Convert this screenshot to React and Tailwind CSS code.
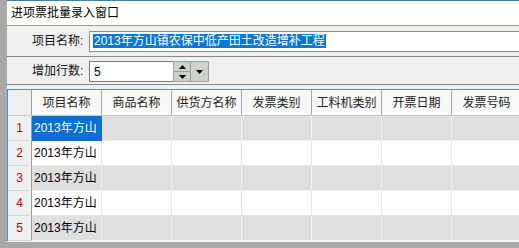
import React from 'react';

const COLUMNS = ['项目名称', '商品名称', '供货方名称', '发票类别', '工料机类别', '开票日期', '发票号码'];
const ROWS = [1, 2, 3, 4, 5];
const FONT = { fontFamily: '"Liberation Sans", "Noto Sans CJK SC", sans-serif' };

const SpinBox = ({ value }) => (
  <div className="flex h-[21px]">
    <div className="w-[84px] h-full bg-white border border-[#7a7a7a] border-r-0 flex items-center pl-[4px] text-[12px] text-black">
      {value}
    </div>
    <div className="w-[18px] h-full flex flex-col border border-[#9aa39a] bg-[#c9d3c9]">
      <div className="flex-1 flex items-center justify-center border-b border-[#9aa39a]">
        <svg width="7" height="4" viewBox="0 0 7 4"><path d="M3.5 0 L7 4 L0 4 Z" fill="#000" /></svg>
      </div>
      <div className="flex-1 flex items-center justify-center">
        <svg width="7" height="4" viewBox="0 0 7 4"><path d="M0 0 L7 0 L3.5 4 Z" fill="#000" /></svg>
      </div>
    </div>
    <div className="w-[18px] h-full flex items-center justify-center border border-l-0 border-[#9aa39a] bg-[#c9d3c9]">
      <svg width="7" height="4" viewBox="0 0 7 4"><path d="M0 0 L7 0 L3.5 4 Z" fill="#000" /></svg>
    </div>
  </div>
);

const App = () => {
  return (
    <div className="w-[519px] h-[248px] flex bg-[#a8a8a8] overflow-hidden text-[12px]" style={FONT}>
      <div className="w-[7px] shrink-0 bg-[#a8a8a8]" />
      <div className="flex-1 flex flex-col min-w-0">
        {/* title bar */}
        <div className="h-[26px] shrink-0 bg-[#fffffb] border-t border-[#3c7fb1] border-b border-b-[#9a9a9a] flex items-center pl-[4px] text-black">
          进项票批量录入窗口
        </div>

        {/* form */}
        <div className="bg-[#f0f0f0] shrink-0">
          <div className="h-[31px] flex items-center pl-[25px] border-b border-[#8a8a8a]">
            <span className="w-[57px] shrink-0 text-[#111]">项目名称:</span>
            <div className="flex-1 h-[21px] bg-white border border-[#8a8a8a] border-r-0 flex items-center pl-[3px]">
              <span className="bg-[#0a78d7] text-white leading-[14px] px-[1px] whitespace-nowrap">2013年方山镇农保中低产田土改造增补工程</span>
            </div>
          </div>
          <div className="h-[28px] flex items-start pt-[4px] pl-[25px] border-b border-[#8a8a8a]">
            <span className="w-[57px] shrink-0 leading-[21px] text-[#111]">增加行数:</span>
            <SpinBox value="5" />
          </div>
          <div className="h-[4px]" />
        </div>

        {/* grid */}
        <div className="shrink-0 border-l border-t border-[#4b8fd0] bg-white">
          <div className="flex h-[26px] border-b border-[#c8c8c8]">
            <div className="w-[24px] shrink-0 bg-[#f0f0f0] border-r border-[#a0a0a0]" />
            {COLUMNS.map((c) => (
              <div
                key={c}
                className="w-[70px] shrink-0 bg-[#f8f8f8] border-r border-[#a8a8a8] flex items-center justify-center text-[#222] whitespace-nowrap"
              >
                {c}
              </div>
            ))}
          </div>
          {ROWS.map((r) => {
            const odd = r % 2 === 1;
            return (
              <div key={r} className="flex h-[25px]">
                <div className="w-[24px] shrink-0 bg-[#f0f0f0] border-r border-[#a0a0a0] border-b border-b-[#d8d8d8] flex items-center justify-center text-[#c00000]">
                  {r}
                </div>
                <div
                  className={`w-[70px] shrink-0 border-r border-b flex items-center pl-[2px] overflow-hidden whitespace-nowrap ${
                    r === 1
                      ? 'bg-[#0a6fd0] text-white border-[#0a6fd0]'
                      : odd
                      ? 'bg-[#dfdfdf] text-black border-[#f2f2f2]'
                      : 'bg-white text-black border-[#e6e6e6]'
                  }`}
                >
                  2013年方山
                </div>
                {COLUMNS.slice(1).map((c) => (
                  <div
                    key={c}
                    className={`w-[70px] shrink-0 border-r border-b ${
                      odd ? 'bg-[#dfdfdf] border-[#f2f2f2]' : 'bg-white border-[#e6e6e6]'
                    }`}
                  />
                ))}
              </div>
            );
          })}
        </div>
        <div className="flex-1 bg-[#a8a8a8] border-t border-[#f4f4f4]" />
      </div>
    </div>
  );
};

export default App;
